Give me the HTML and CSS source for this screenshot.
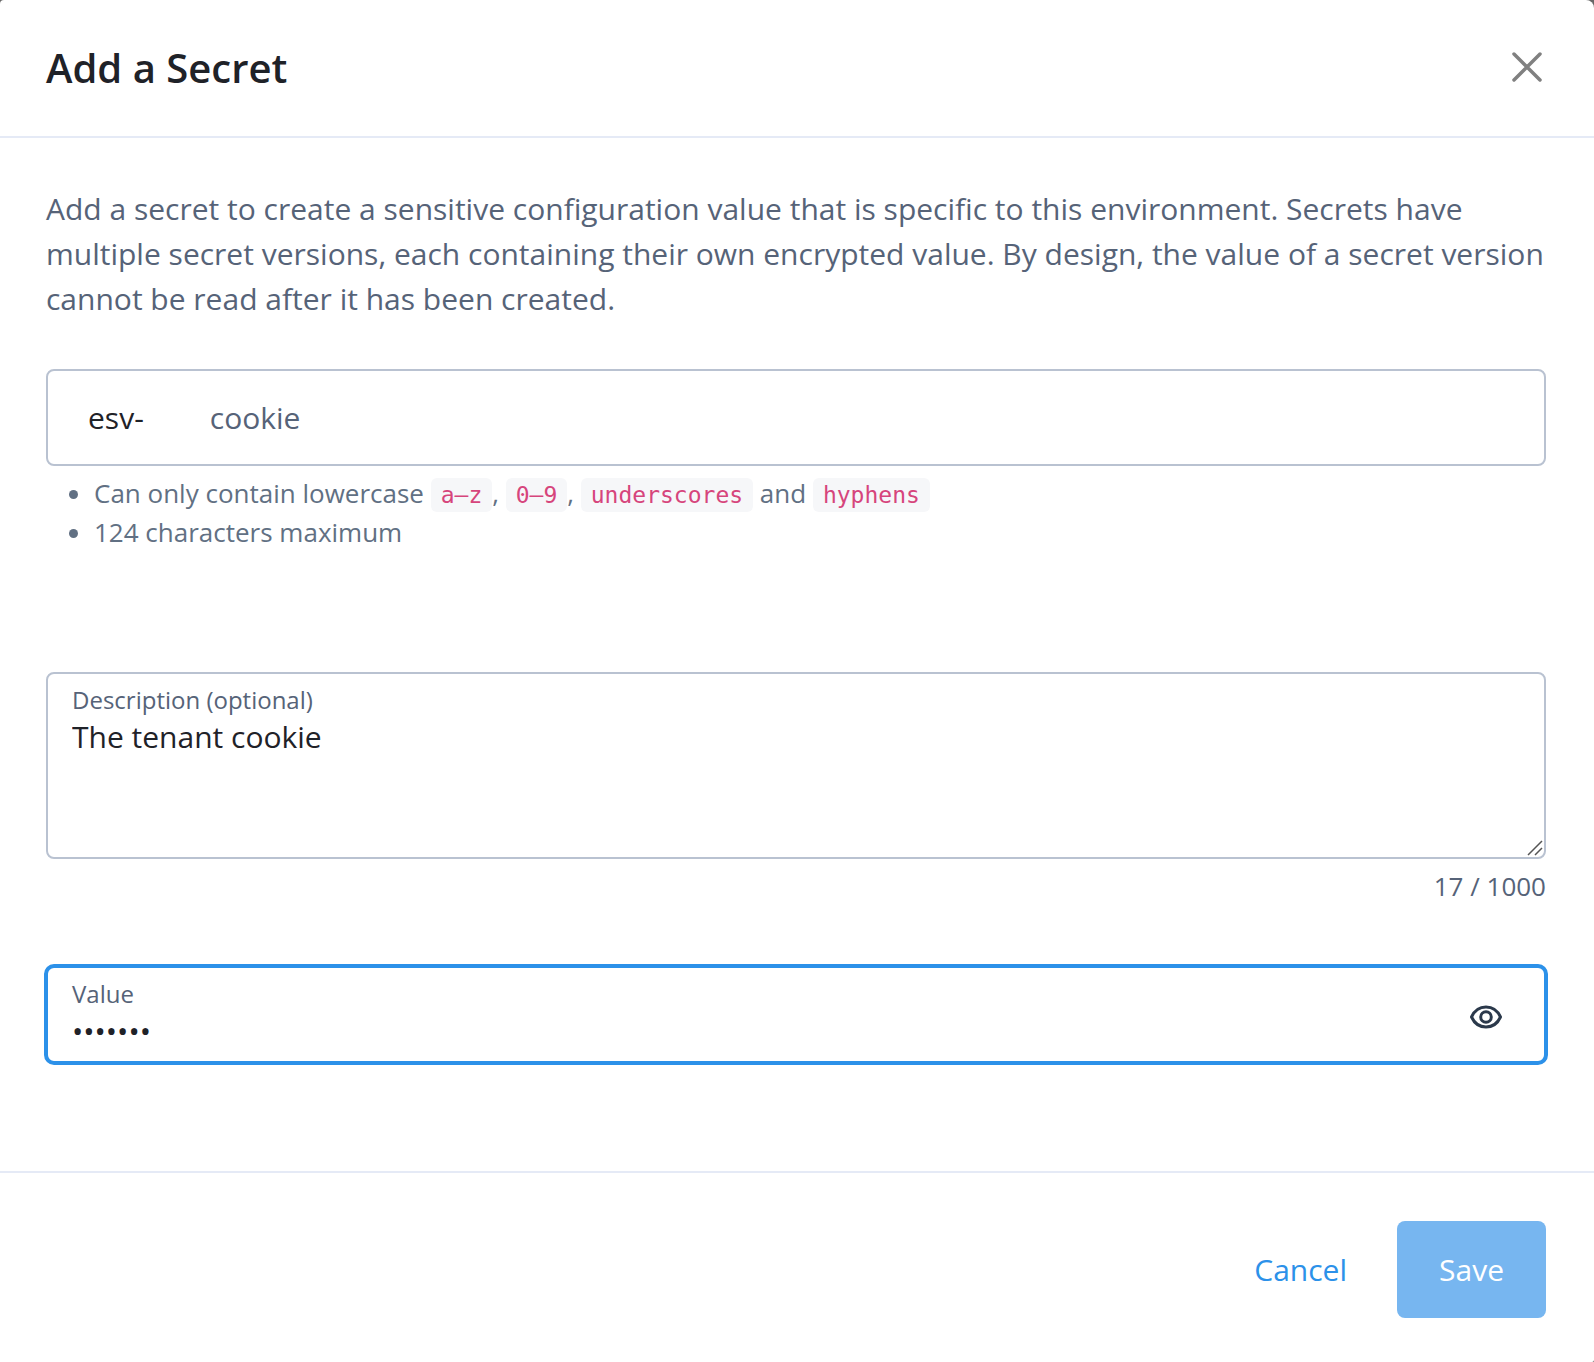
FILE: index.html
```html
<!DOCTYPE html>
<html lang="en">
<head>
  <meta charset="utf-8">
  <meta name="viewport" content="width=device-width, initial-scale=1">
  <title>Add a Secret</title>
  <link rel="stylesheet" href="styles.css">
</head>
<body>
  <form class="modal" role="dialog" aria-labelledby="modal-title">
    <header class="modal-header">
      <h1 class="modal-title" id="modal-title">Add a Secret</h1>
      <button class="icon-button" type="button" aria-label="Close">
        <svg width="32" height="32" viewBox="0 0 32 32" fill="none" stroke="#808080" stroke-width="3.500" stroke-linecap="round" aria-hidden="true">
          <path d="M3 2L29 28M29 2L3 28"/>
        </svg>
      </button>
    </header>

    <main class="modal-body">
      <p class="intro">Add a secret to create a sensitive configuration value that is specific to this environment. Secrets have multiple secret versions, each containing their own encrypted value. By design, the value of a secret version cannot be read after it has been created.</p>

      <div class="field field-prefixed">
        <label class="prefix" for="secret-name">esv-</label>
        <input class="control name-control" id="secret-name" type="text" value="cookie">
      </div>
      <ul class="hints">
        <li>Can only contain lowercase <code>a–z</code>, <code>0–9</code>, <code>underscores</code> and <code>hyphens</code></li>
        <li>124 characters maximum</li>
      </ul>

      <div class="field field-stacked">
        <label class="field-label" for="description">Description (optional)</label>
        <textarea class="control description-control" id="description">The tenant cookie</textarea>
        <svg class="grip" width="16" height="16" viewBox="0 0 16 16" fill="none" stroke="#555" stroke-width="1.500" aria-hidden="true">
          <path d="M1 15L15 1M8 15L15 8"/>
        </svg>
      </div>
      <p class="counter">17 / 1000</p>

      <div class="field field-focused">
        <div class="field-main">
          <label class="field-label" for="secret-value">Value</label>
          <input class="control" id="secret-value" type="password" value="secrets">
        </div>
        <button class="icon-button" type="button" aria-label="Show value">
          <svg width="34" height="26" viewBox="0 0 34 26" fill="none" stroke="#2b394b" stroke-width="3" aria-hidden="true">
            <path d="M2.500 13C5.500 6.500 10.800 3 17 3S28.500 6.500 31.500 13C28.500 19.500 23.200 23 17 23S5.500 19.500 2.500 13Z" stroke-linejoin="round"/>
            <circle cx="17" cy="13" r="5.300"/>
          </svg>
        </button>
      </div>
    </main>

    <footer class="modal-footer">
      <button class="button button-link" type="button">Cancel</button>
      <button class="button button-primary" type="submit">Save</button>
    </footer>
  </form>
</body>
</html>
```

FILE: styles.css
```css
*,
*::before,
*::after {
  box-sizing: border-box;
}

body {
  margin: 0;
  background: #666;
  color: #1f2228;
  font-family: "Open Sans", "Noto Sans", sans-serif;
  font-size: 30px;
  line-height: 45px;
}

.modal {
  display: flex;
  flex-direction: column;
  min-height: 100vh;
  background: #fff;
  border-radius: 4px 8px 2px 0;
}

.modal-header {
  display: flex;
  align-items: center;
  justify-content: space-between;
  padding: 38px 51px 38px 46px;
  border-bottom: 2px solid #e5eaf6;
}

.modal-title {
  margin: 0;
  font-size: 40px;
  font-weight: 600;
  line-height: 60px;
}

.icon-button {
  display: flex;
  padding: 0;
  border: 0;
  background: none;
  cursor: pointer;
}

.modal-body {
  flex: 1;
  padding: 48px 48px 108px 46px;
}

.intro {
  margin: 0 0 48px;
  color: #566378;
}

.field {
  border: 2px solid #b9c2d1;
  border-radius: 8px;
}

.control {
  display: block;
  width: 100%;
  height: 45px;
  margin: 0;
  padding: 0;
  border: 0;
  outline: 0;
  background: none;
  color: inherit;
  font: inherit;
}

.field-prefixed {
  display: flex;
  gap: 66px;
  padding: 24px 40px;
}

.name-control {
  color: #566378;
}

.hints {
  margin: 8px 0 120px;
  padding-left: 48px;
  color: #617083;
  font-size: 26px;
  line-height: 39px;
}

.hints code {
  padding: 4px 10px;
  border-radius: 6px;
  background: #f6f7f9;
  color: #d6457c;
  font-family: "DejaVu Sans Mono", monospace;
  font-size: 23px;
  line-height: 1;
}

.field-label {
  display: block;
  color: #566378;
  font-size: 24px;
  line-height: 28px;
}

.field-stacked {
  position: relative;
  padding: 12px 24px 0;
}

.description-control {
  height: 143px;
  resize: none;
}

.grip {
  position: absolute;
  right: 1px;
  bottom: 1px;
}

.counter {
  margin: 8px 0 60px;
  color: #566378;
  font-size: 26px;
  line-height: 39px;
  text-align: right;
}

/* The focus border is twice as thick and grows outwards. */
.field-focused {
  display: flex;
  align-items: center;
  gap: 24px;
  margin: -2px;
  padding: 12px 41px 8px 24px;
  border-width: 4px;
  border-color: #2c91e9;
  border-radius: 10px;
}

.field-main {
  flex: 1;
}

.modal-footer {
  display: flex;
  justify-content: flex-end;
  gap: 8px;
  padding: 48px 48px 44px;
  border-top: 2px solid #e5eaf6;
}

.button {
  padding: 26px 42px;
  border: 0;
  border-radius: 8px;
  background: none;
  font: inherit;
  cursor: pointer;
}

.button-link {
  color: #2c91e9;
}

.button-primary {
  background: #77b6f0;
  color: #fff;
}
```
